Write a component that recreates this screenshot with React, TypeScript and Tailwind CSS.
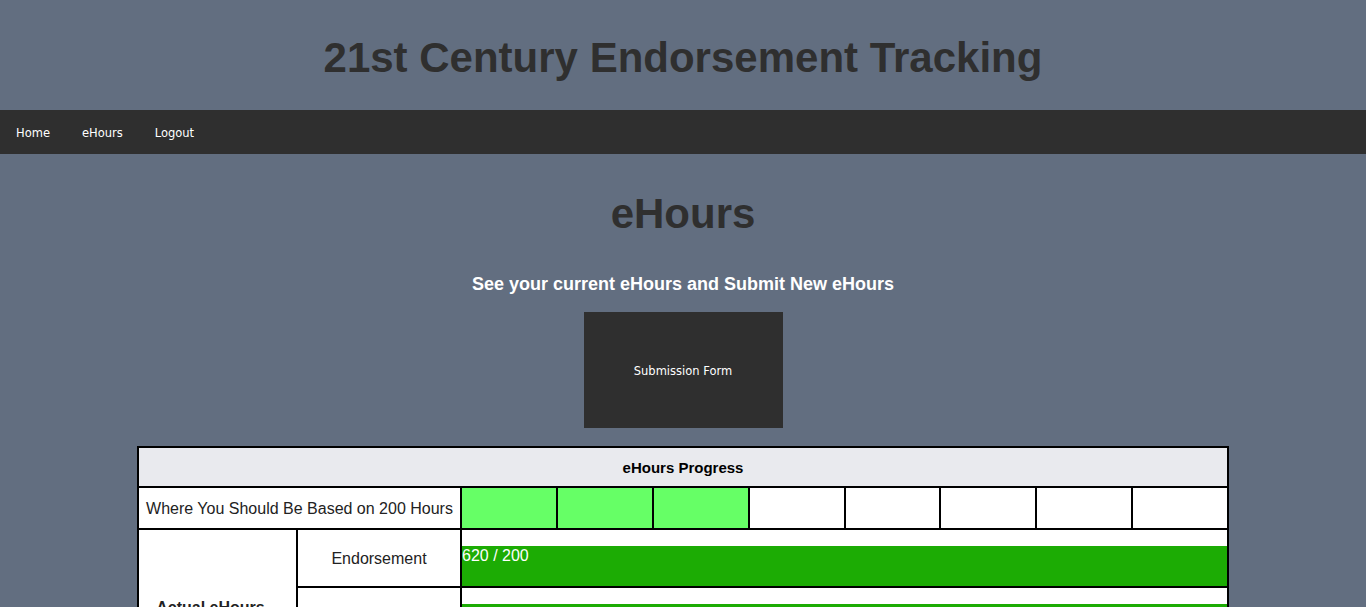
export default function App() {
  const expected = [true, true, true, false, false, false, false, false];

  return (
    <div className="min-h-screen bg-[#626e80] font-['Liberation_Sans',Arial,sans-serif] pb-10">
      <header className="h-[110px] pt-[34px]">
        <h1 className="text-center text-[42px] leading-[48px] font-bold text-[#2f2f2f]">
          21st Century Endorsement Tracking
        </h1>
      </header>

      <nav className="h-[44px] bg-[#2f2f2f] flex items-center pt-[4px] font-['DejaVu_Sans',sans-serif] text-[11.5px] text-white">
        <a className="px-4" href="#">Home</a>
        <a className="px-4" href="#">eHours</a>
        <a className="px-4" href="#">Logout</a>
      </nav>

      <main className="flex flex-col items-center">
        <h2 className="mt-[36px] text-[42px] leading-[48px] font-bold text-[#2f2f2f]">eHours</h2>
        <p className="mt-[35px] text-[18px] leading-[22px] font-bold text-white">
          See your current eHours and Submit New eHours
        </p>
        <button className="mt-[17px] w-[199px] h-[116px] pt-[4px] bg-[#2f2f2f] text-white text-[11.5px] font-['DejaVu_Sans',sans-serif]">
          Submission Form
        </button>

        <div className="mt-[18px] w-[1092px] bg-black p-[2px] grid grid-cols-[157px_162px_repeat(8,1fr)] gap-[2px]">
          <div className="col-span-10 h-[38px] pt-[2px] bg-[#e9eaee] flex items-center justify-center text-[15px] font-bold text-black">
            eHours Progress
          </div>

          <div className="col-span-2 h-[40px] pt-[2px] bg-white flex items-center justify-center text-[16px] text-[#222]">
            Where You Should Be Based on 200 Hours
          </div>
          {expected.map((on, i) => (
            <div key={i} className={on ? "bg-[#66ff66]" : "bg-white"} />
          ))}

          <div className="row-span-3 bg-white flex items-center justify-center pb-[16px] pr-[14px] text-[16px] font-bold text-[#222]">
            Actual eHours
          </div>

          <div className="h-[56px] pt-[2px] bg-white flex items-center justify-center text-[16px] text-[#222]">
            Endorsement
          </div>
          <div className="col-span-8 bg-white pt-4">
            <div className="h-10 bg-[#1cac04] pt-px text-white text-[16px] leading-[18px]">620 / 200</div>
          </div>

          <div className="h-[56px] pt-[2px] bg-white flex items-center justify-center text-[16px] text-[#222]">
            Service
          </div>
          <div className="col-span-8 bg-white pt-4">
            <div className="h-10 bg-[#1cac04]" />
          </div>

          <div className="h-[56px] pt-[2px] bg-white flex items-center justify-center text-[16px] text-[#222]">
            Total
          </div>
          <div className="col-span-8 bg-white pt-4">
            <div className="h-10 bg-[#1cac04]" />
          </div>
        </div>
      </main>
    </div>
  );
}
